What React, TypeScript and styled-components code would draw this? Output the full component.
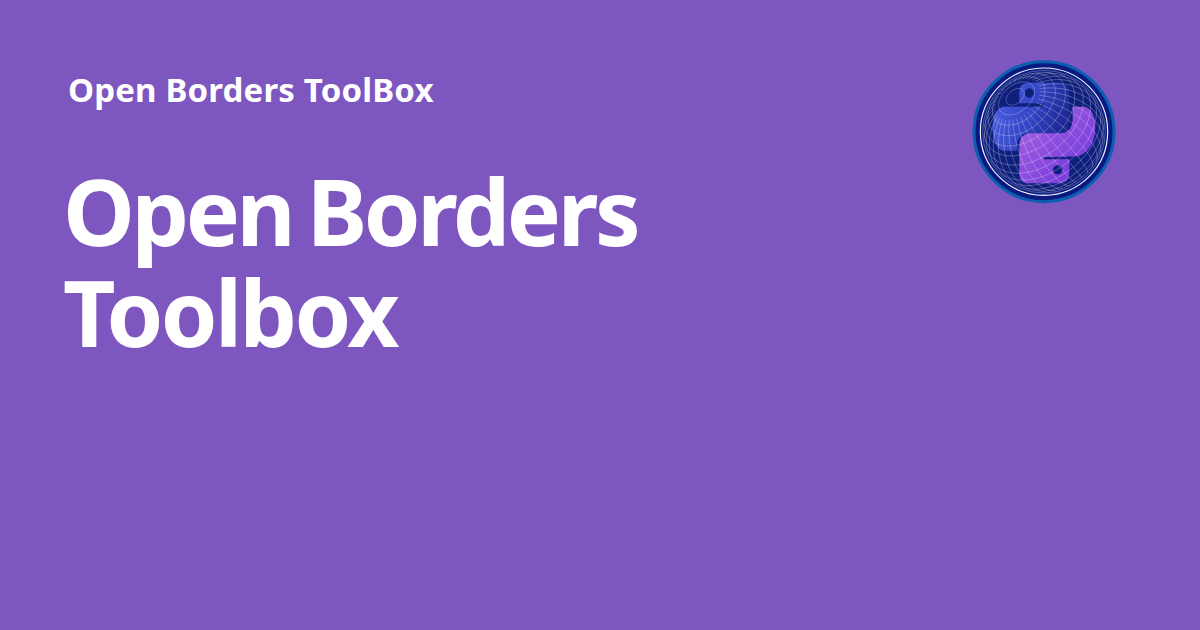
import React from "react";
import styled, { createGlobalStyle } from "styled-components";

const Global = createGlobalStyle`
  html, body { margin: 0; padding: 0; background: #7e56c0; }
`;
const Page = styled.main`
  width: 1200px; height: 630px; box-sizing: border-box; overflow: hidden;
  background: #7e56c0; color: #fff;
  padding: 50px 75px 0 65px;
  display: flex; justify-content: space-between; align-items: flex-start;
  font-family: "Noto Sans", "Open Sans", sans-serif; font-weight: 700;
`;
const TextColumn = styled.div`display: flex; flex-direction: column; padding-top: 10px;`;
const SiteName = styled.div`font-size: 33px; line-height: 60px; padding-left: 3px; letter-spacing: 0.15px;`;
const Title = styled.h1`margin: 41px 0 0 -2px; font-size: 91px; line-height: 101px; font-weight: 700; word-spacing: -6px;`;
const TitleLine = styled.span<{ $tracking: number }>`display: block; letter-spacing: ${(p) => p.$tracking}px;`;
const LogoMark = styled.svg`width: 165px; height: 165px; display: block; flex: none;`;

const CX = 252, CY = 245, R = 180;
function lines() {
  const out: string[] = [];
  const tiltX = 0.7, tiltZ = 0.69;
  const proj = (lat: number, lon: number) => {
    const x = Math.cos(lat) * Math.sin(lon), y = Math.sin(lat), z = Math.cos(lat) * Math.cos(lon);
    const y2 = y * Math.cos(tiltX) - z * Math.sin(tiltX), z2 = y * Math.sin(tiltX) + z * Math.cos(tiltX);
    const x3 = x * Math.cos(tiltZ) - y2 * Math.sin(tiltZ), y3 = x * Math.sin(tiltZ) + y2 * Math.cos(tiltZ);
    return { x: CX + R * x3, y: CY - R * y3, z: z2 };
  };
  const trace = (f: (t: number) => { x: number; y: number; z: number }) => {
    let d = "", on = false;
    for (let i = 0; i <= 120; i++) {
      const p = f(i / 120);
      if (p.z < 0) { on = false; continue; }
      d += `${on ? "L" : "M"}${p.x.toFixed(1)} ${p.y.toFixed(1)}`;
      on = true;
    }
    if (d) out.push(d);
  };
  const rad = Math.PI / 180;
  for (let a = -80; a <= 80; a += 10) trace((t) => proj(a * rad, t * 2 * Math.PI));
  for (let b = 0; b < 360; b += 10) trace((t) => proj((-90 + t * 155) * rad, b * rad));
  return out;
}

const Logo = () => (
  <LogoMark viewBox="0 0 495 495" role="img" aria-label="Open Borders ToolBox logo">
    <defs>
      <linearGradient id="snakeBlue" x1="0" y1="0.2" x2="1" y2="0.5">
        <stop offset="0" stopColor="#4a60e0" /><stop offset="0.5" stopColor="#3546c8" /><stop offset="1" stopColor="#1a2690" />
      </linearGradient>
      <linearGradient id="snakePurple" x1="0" y1="0" x2="1" y2="1">
        <stop offset="0" stopColor="#ab66e2" /><stop offset="1" stopColor="#6a32da" />
      </linearGradient>
      <clipPath id="sphereClip"><circle cx={CX} cy={CY} r={R} /></clipPath>
    </defs>
    <circle cx={CX} cy={CY} r={210} fill="#0a1a80" stroke="#0a5fb0" strokeWidth={9} />
    <circle cx={CX} cy={CY} r={191} fill="none" stroke="#f0f3fc" strokeWidth={3.5} />
    <circle cx={CX} cy={CY} r={184} fill="#0e1f7c" stroke="#8f9bd0" strokeWidth={1.5} />
    <g clipPath="url(#sphereClip)">
      <path fill="url(#snakeBlue)" fillRule="evenodd" d="M205 98H296Q328 100 328 132V222Q326 248 298 250H205Q172 254 170 290V302H128Q98 292 98 235Q98 178 130 170H250V160H178V125Q178 100 205 98ZM208 115a14 14 0 1 0 .1 0Z" />
      <path fill="url(#snakePurple)" fillRule="evenodd" d="M338 170H376Q406 182 406 235Q404 300 355 319L252 322V328H328V372Q326 398 298 400H205Q178 398 178 372V282Q180 254 208 250H305Q336 246 338 210ZM293 345a14 14 0 1 0 .1 0Z" />
      <g fill="none" stroke="#ffffff" strokeOpacity="0.5" strokeWidth="1.6">
        {lines().map((d, i) => <path key={i} d={d} />)}
      </g>
    </g>
  </LogoMark>
);

export default function App() {
  return (
    <Page>
      <Global />
      <TextColumn>
        <SiteName>Open Borders ToolBox</SiteName>
        <Title>
          <TitleLine $tracking={-3.4}>Open Borders</TitleLine>
          <TitleLine $tracking={-2.6}>Toolbox</TitleLine>
        </Title>
      </TextColumn>
      <Logo />
    </Page>
  );
}
